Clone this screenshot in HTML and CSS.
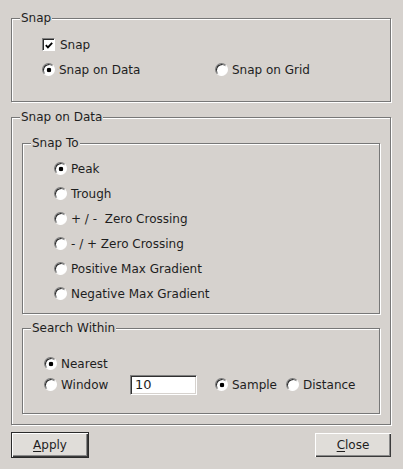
FILE: index.html
```html
<!DOCTYPE html>
<html>
<head>
<meta charset="utf-8">
<link rel="stylesheet" href="styles.css">
</head>
<body>
<div class="dialog">
  <fieldset class="group">
    <legend>Snap</legend>
    <div class="snap-body">
      <label class="item"><span class="check"><svg viewBox="0 0 11 11" width="11" height="11"><path d="M2 5.2 L4.3 7.6 L9 2.6" fill="none" stroke="#000" stroke-width="2"/></svg></span><span>Snap</span></label>
      <span></span>
      <label class="item"><span class="radio on"></span><span>Snap on Data</span></label>
      <label class="item"><span class="radio"></span><span>Snap on Grid</span></label>
    </div>
  </fieldset>

  <fieldset class="group outer">
    <legend>Snap on Data</legend>
    <div class="outer-body">
      <fieldset class="group">
        <legend>Snap To</legend>
        <div class="list">
          <label class="item"><span class="radio on"></span><span>Peak</span></label>
          <label class="item"><span class="radio"></span><span>Trough</span></label>
          <label class="item"><span class="radio"></span><span>+ / -  Zero Crossing</span></label>
          <label class="item"><span class="radio"></span><span>- / + Zero Crossing</span></label>
          <label class="item"><span class="radio"></span><span>Positive Max Gradient</span></label>
          <label class="item"><span class="radio"></span><span>Negative Max Gradient</span></label>
        </div>
      </fieldset>
      <fieldset class="group search">
        <legend>Search Within</legend>
        <div class="search-body">
          <div class="srow">
            <label class="item"><span class="radio on"></span><span>Nearest</span></label>
          </div>
          <div class="srow">
            <label class="item w-window"><span class="radio"></span><span>Window</span></label>
            <span class="field">10</span>
            <label class="item w-sample"><span class="radio on"></span><span>Sample</span></label>
            <label class="item"><span class="radio"></span><span>Distance</span></label>
          </div>
        </div>
      </fieldset>
    </div>
  </fieldset>

  <div class="buttons">
    <button class="btn default"><u>A</u>pply</button>
    <button class="btn"><u>C</u>lose</button>
  </div>
</div>
</body>
</html>
```

FILE: styles.css
```css
html, body {
  margin: 0;
  padding: 0;
  background: #d6d2ce;
}
body {
  width: 403px;
  height: 469px;
  overflow: hidden;
  font-family: "DejaVu Sans", sans-serif;
  font-size: 12px;
  color: #1e1e1e;
}
.dialog {
  padding: 11px 12px 0 11px;
}
.group {
  margin: 0;
  padding: 0;
  border: 1px solid #777;
  box-shadow: 1px 1px 0 #fff, inset 1px 1px 0 #fff;
  min-width: 0;
}
.group legend {
  margin-left: 8px;
  padding: 0 1px;
  line-height: 15px;
  background: #d6d2ce;
}
.item {
  display: flex;
  align-items: center;
  gap: 4px;
  white-space: pre;
}
.snap-body {
  display: grid;
  grid-template-columns: 173px 1fr;
  grid-auto-rows: 25px;
  padding: 6px 0 19px 30px;
}
.outer {
  margin-top: 8px;
}
.outer-body {
  padding: 11px 10px 10px 10px;
}
.list {
  display: grid;
  grid-auto-rows: 25px;
  padding: 5px 0 7px 31px;
}
.search {
  margin-top: 7px;
}
.search-body {
  padding: 17px 0 18px 21px;
}
.srow {
  display: flex;
  align-items: center;
  height: 21px;
}
.w-window {
  width: 86px;
}
.w-sample {
  width: 71px;
  margin-left: 18px;
}
.field {
  box-sizing: border-box;
  width: 67px;
  height: 20px;
  background: #fff;
  border: 1px solid;
  border-color: #808080 #fff #fff #808080;
  box-shadow: inset 1px 1px 0 #303030, inset -1px -1px 0 #d6d2ce;
  padding: 0 0 0 4px;
  line-height: 18px;
  font-size: 13px;
}
.radio {
  flex: none;
  box-sizing: border-box;
  width: 13px;
  height: 13px;
  border-radius: 50%;
  border: 1px solid;
  border-color: #7a7a7a #fff #fff #7a7a7a;
  box-shadow: inset 1px 1px 0 #2a2a2a;
  background: #fff;
}
.radio.on {
  background: radial-gradient(circle at 6px 6px, #000 0, #000 2px, #fff 2.6px);
}
.check {
  flex: none;
  box-sizing: border-box;
  width: 13px;
  height: 13px;
  border: 1px solid;
  border-color: #808080 #fff #fff #808080;
  box-shadow: inset 1px 1px 0 #2a2a2a;
  background: #fff;
  display: flex;
  align-items: center;
  justify-content: center;
  margin-right: 1px;
}
.check svg {
  display: block;
  margin: 1px 0 0 1px;
}
.buttons {
  display: flex;
  justify-content: space-between;
  align-items: center;
  margin-top: 7px;
}
.btn {
  box-sizing: border-box;
  width: 76px;
  height: 24px;
  margin: 0;
  padding: 0;
  border: none;
  background: #e0ddd9;
  box-shadow: inset 1px 1px 0 #fff, inset -1px -1px 0 #3a3a3a, inset -2px -2px 0 #8a8a8a;
  font-family: "DejaVu Sans", sans-serif;
  font-size: 12px;
  color: #1e1e1e;
}
.btn u {
  text-underline-offset: 2px;
}
.btn.default {
  width: 78px;
  height: 26px;
  border: 1px solid #2a2a2a;
}
```
